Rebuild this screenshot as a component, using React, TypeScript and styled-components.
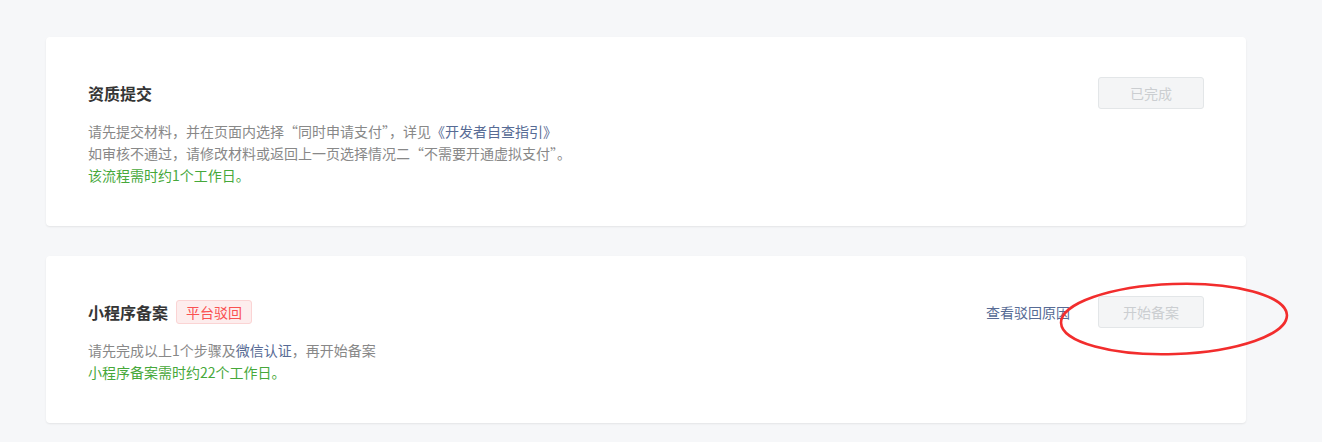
import React from 'react';
import styled, { createGlobalStyle } from 'styled-components';

const GlobalStyle = createGlobalStyle`
  html, body {
    margin: 0;
    padding: 0;
    background: #f6f7f9;
    font-family: "Noto Sans CJK SC", "Noto Sans", sans-serif;
  }
`;

const Page = styled.div`
  width: 1200px;
  padding: 37px 0 20px 46px;
  display: flex;
  flex-direction: column;
  gap: 30px;
`;

const Card = styled.div`
  position: relative;
  background: #fff;
  border-radius: 4px;
  box-shadow: 0 1px 2px rgba(0, 0, 0, 0.08);
  padding: 40px 42px 40px 42px;
`;

const Header = styled.div`
  display: flex;
  align-items: center;
  height: 32px;
`;

const Title = styled.h3`
  margin: 0;
  font-size: 16px;
  font-weight: 700;
  color: #353535;
`;

const Badge = styled.span`
  margin-left: 8px;
  height: 22px;
  line-height: 22px;
  padding: 0 9px;
  font-size: 14px;
  color: #fa5151;
  background: #fdeded;
  border: 1px solid #fbd4d4;
  border-radius: 3px;
`;

const Actions = styled.div`
  margin-left: auto;
  display: flex;
  align-items: center;
  gap: 28px;
`;

const TextLink = styled.a`
  font-size: 14px;
  color: #576b95;
  text-decoration: none;
  cursor: pointer;
`;

const DisabledButton = styled.button`
  width: 106px;
  height: 32px;
  font-family: inherit;
  font-size: 14px;
  color: #cbced1;
  background: #f4f5f6;
  border: 1px solid #e3e6e8;
  border-radius: 3px;
  cursor: not-allowed;
`;

const Desc = styled.div`
  margin-top: 11px;
  font-size: 14px;
  line-height: 22px;
  color: #888;
`;

const Line = styled.div<{ $green?: boolean }>`
  color: ${({ $green }) => ($green ? '#46a83a' : 'inherit')};
`;

const Inline = styled.a`
  color: #576b95;
  text-decoration: none;
`;

const Mark = styled.svg`
  position: absolute;
  left: 1006px;
  top: 22px;
  pointer-events: none;
`;

export default function App() {
  return (
    <>
      <GlobalStyle />
      <Page>
        <Card>
          <Header>
            <Title>资质提交</Title>
            <Actions>
              <DisabledButton disabled>已完成</DisabledButton>
            </Actions>
          </Header>
          <Desc>
            <Line>
              请先提交材料，并在页面内选择“同时申请支付”，详见<Inline>《开发者自查指引》</Inline>
            </Line>
            <Line>如审核不通过，请修改材料或返回上一页选择情况二“不需要开通虚拟支付”。</Line>
            <Line $green>该流程需时约1个工作日。</Line>
          </Desc>
        </Card>
        <Card>
          <Header>
            <Title>小程序备案</Title>
            <Badge>平台驳回</Badge>
            <Actions>
              <TextLink>查看驳回原因</TextLink>
              <DisabledButton disabled>开始备案</DisabledButton>
            </Actions>
          </Header>
          <Desc>
            <Line>
              请先完成以上1个步骤及<Inline>微信认证</Inline>，再开始备案
            </Line>
            <Line $green>小程序备案需时约22个工作日。</Line>
          </Desc>
          <Mark width="244" height="82" viewBox="0 0 244 82">
            <ellipse
              cx="122"
              cy="41"
              rx="113"
              ry="35"
              fill="none"
              stroke="#f22d2d"
              strokeWidth="2.6"
              transform="rotate(-2 122 41)"
            />
          </Mark>
        </Card>
      </Page>
    </>
  );
}
